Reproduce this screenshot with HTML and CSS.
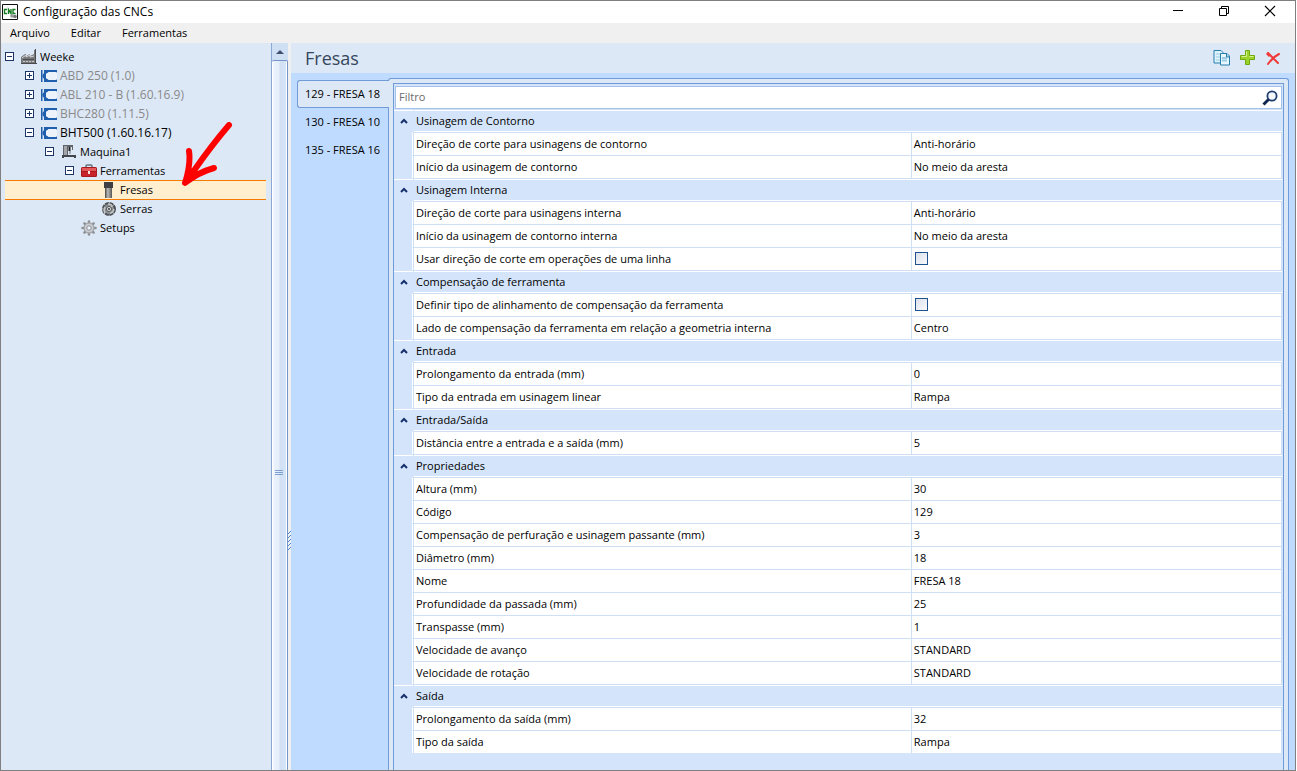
FILE: index.html
```html
<!DOCTYPE html>
<html lang="pt-BR">
<head>
<meta charset="utf-8">
<title>Configuração das CNCs</title>
<link rel="stylesheet" href="styles.css">
</head>
<body>
<svg class="symbols" aria-hidden="true">
  <symbol id="machine" viewBox="0 0 16 16">
    <path d="M0 2h1.500v12H0z" fill="#1f5fae"/>
    <path d="M3 2h13v3l-1-1H8L5 6v4l3 2h7l1-1v3H3v-3L1.500 9V7L3 5z" fill="#1f5fae"/>
    <path d="M8 4h6.500l1.500 1v6l-1.500 1H8l-3-2V6z" fill="#edf3fb"/>
  </symbol>
  <symbol id="gear" viewBox="0 0 16 16">
    <path d="M8 1.500v13M1.500 8h13M3.400 3.400l9.200 9.200M12.600 3.400l-9.200 9.200" stroke="#8f9398" stroke-width="2.600" stroke-linecap="round"/>
    <circle cx="8" cy="8" r="5" fill="#c9ccd0" stroke="#9a9ea3"/>
    <circle cx="8" cy="8" r="2.200" fill="#eef3f9" stroke="#8c9096"/>
  </symbol>
  <symbol id="chevron" viewBox="0 0 8 6"><path d="M1 5l3-3 3 3" fill="none" stroke="#16306b" stroke-width="2"/></symbol>
</svg>
<div class="window">
  <header class="titlebar">
    <svg class="app-icon" width="16" height="16" viewBox="0 0 16 16"><path d="M.5.5h15v15H.5z" fill="#fff" stroke="#111"/><path d="M5 5.500H2.500v4H5M6.500 10V5.500L9 9.500V5M13.500 5.500H11v4h2.500" fill="none" stroke="#177a22" stroke-width="1.400"/><circle cx="10" cy="12" r="1.800" fill="#999"/><circle cx="13" cy="12.500" r="1.800" fill="#777"/></svg>
    <h1 class="title">Configuração das CNCs</h1>
    <button class="win-button" aria-label="Minimizar"><svg width="12" height="12"><path d="M1 5.500h10" stroke="#000"/></svg></button>
    <button class="win-button" aria-label="Restaurar"><svg width="12" height="12"><path d="M1.500 3.500h7v7h-7zM3.500 3V1.500h7v7H9" fill="none" stroke="#000"/></svg></button>
    <button class="win-button" aria-label="Fechar"><svg width="12" height="12"><path d="M1 1l10 10M11 1L1 11" stroke="#000" stroke-width="1.200"/></svg></button>
  </header>
  <nav class="menubar">
    <button class="menu">Arquivo</button><button class="menu">Editar</button><button class="menu">Ferramentas</button>
  </nav>
  <div class="workspace">
    <aside class="sidebar">
      <ul class="tree">
        <li class="node"><button class="toggle" aria-label="Recolher Weeke"></button><svg class="icon" viewBox="0 0 16 16"><path d="M0 8l4-3h1v2l4-2v2l4-2V1h2v14H0z" fill="#77797b"/><path d="M1 9l4-3v2l4-2v2l4-1" fill="none" stroke="#d5d7d8"/><path d="M2 10.500h11" stroke="#4a4c4e"/><path d="M2 12.500h11" stroke="#c4c6c8" stroke-dasharray="2 1"/><path d="M0 14.500h16M14.500 0v14" stroke="#4a4c4e"/></svg><span class="label">Weeke</span></li>
        <li class="node level-1 machine muted"><button class="toggle closed" aria-label="Expandir ABD 250"></button><svg class="icon"><use href="#machine"/></svg><span class="label">ABD 250 (1.0)</span></li>
        <li class="node level-1 machine muted"><button class="toggle closed" aria-label="Expandir ABL 210"></button><svg class="icon"><use href="#machine"/></svg><span class="label">ABL 210 - B (1.60.16.9)</span></li>
        <li class="node level-1 machine muted"><button class="toggle closed" aria-label="Expandir BHC280"></button><svg class="icon"><use href="#machine"/></svg><span class="label">BHC280 (1.11.5)</span></li>
        <li class="node level-1"><button class="toggle" aria-label="Recolher BHT500"></button><svg class="icon"><use href="#machine"/></svg><span class="label machine">BHT500 (1.60.16.17)</span></li>
        <li class="node level-2"><button class="toggle" aria-label="Recolher Maquina1"></button><svg class="icon" viewBox="0 0 16 16"><path d="M2 1h10v5h-1V3H7v9H2z" fill="#606367"/><path d="M3 2h3v9H3z" fill="#a2a6a9"/><path d="M8.500 3v4" fill="none" stroke="#222" stroke-width="2"/><path d="M9 7v3" stroke="#777"/><path d="M1 11h14v3h-2v-1H3v1H1z" fill="#43464a"/></svg><span class="label">Maquina1</span></li>
        <li class="node level-3"><button class="toggle" aria-label="Recolher Ferramentas"></button><svg class="icon" viewBox="0 0 16 16"><path d="M5 5V3q0-1 1-1h4q1 0 1 1v2" fill="none" stroke="#66717c" stroke-width="1.500"/><rect y="4" width="16" height="10" rx="1.500" fill="#a81820"/><path d="M1 5h14v3H1z" fill="#e4585a"/><path d="M1 9h14v4H1z" fill="#c8232b"/><path d="M7 8h2v3H7z" fill="#f7e3e3"/></svg><span class="label">Ferramentas</span></li>
        <li class="node level-4 selected"><svg class="icon" viewBox="0 0 16 16"><defs><linearGradient id="steel"><stop stop-color="#444"/><stop offset=".4" stop-color="#bbb"/><stop offset="1" stop-color="#555"/></linearGradient></defs><path d="M3 0h9v6H3z" fill="#3d3f42"/><path d="M4 6h7v10H4z" fill="url(#steel)"/></svg><span class="label">Fresas</span></li>
        <li class="node level-4"><svg class="icon" viewBox="0 0 16 16"><circle cx="8" cy="8" r="6" fill="#8b8e91" stroke="#4c4f52" stroke-width="2" stroke-dasharray="4 .7"/><path d="M7 3q4 0 4 3M13 8q-1 4-4 4M4 12q-2-3 0-6" fill="none" stroke="#c4c6c8" stroke-width="1.500"/><circle cx="8" cy="8" r="2.500" fill="#dfe1e3" stroke="#55585b"/><circle cx="8" cy="8" r="1" fill="#333"/></svg><span class="label">Serras</span></li>
        <li class="node level-3 leaf"><svg class="icon"><use href="#gear"/></svg><span class="label">Setups</span></li>
      </ul>
      <div class="scrollbar"><button class="scroll-up" aria-label="Rolar para cima"><svg width="8" height="5"><path d="M0 5l4-4 4 4z" fill="#3d4f70"/></svg></button><div class="thumb"><svg width="8" height="6"><path d="M0 .5h8M0 2.500h8M0 4.500h8" stroke="#7d9fd0"/></svg></div></div>
      <svg class="pointer" width="52" height="68" viewBox="0 0 52 68" aria-hidden="true"><path d="M48 3Q30 24 12 50M8 29Q10 42 4 61Q18 50 33 46" fill="none" stroke="#f00" stroke-width="6" stroke-linecap="round" stroke-linejoin="round"/><path d="M8 30L4 61 34 47 17 49 9 46z" fill="#f00"/></svg>
    </aside>
    <div class="splitter"><svg width="3" height="20"><path d="M0 3l3-3M0 7l3-3M0 11l3-3M0 15l3-3M0 19l3-3" stroke="#4c86d0"/></svg></div>
    <main class="content">
      <div class="content-head">
        <h2 class="heading">Fresas</h2>
        <button class="tool" aria-label="Copiar"><svg width="18" height="16" viewBox="0 0 18 16"><path d="M1 .5h7l2 2V13H1z" fill="#dff3fc" stroke="#247eae"/><path d="M3 4h5M3 7h4M3 10h4" stroke="#9bcde6"/><path d="M7.500 3.500H14l2.500 2.500v9h-9z" fill="#e8f7fd" stroke="#247eae"/><path d="M13.500 4v3h3" fill="#a6d6eb" stroke="#247eae"/><path d="M9 8h5M9 10.500h5" stroke="#9bcde6" stroke-width="2"/></svg></button>
        <button class="tool" aria-label="Adicionar"><svg width="16" height="16" viewBox="0 0 16 16"><path d="M5.500.5h4v5h5v4h-5v5h-4v-5h-5v-4h5z" fill="#9bd32a" stroke="#6fa80f"/><path d="M6.500 1.500v5h-5M9.500 6.500h4" fill="none" stroke="#d6f28a"/></svg></button>
        <button class="tool" aria-label="Excluir"><svg width="16" height="16" viewBox="0 0 16 16"><path d="M3 3l4 4 6 6M14 4Q8 7 3 14" fill="none" stroke="#f03a3a" stroke-width="2" stroke-linecap="round"/><path d="M2 3l3 3" stroke="#f03a3a" stroke-width="3"/></svg></button>
      </div>
      <div class="editor">
        <div class="tabs" role="tablist">
          <button class="tab active" role="tab" aria-selected="true">129 - FRESA 18</button>
          <button class="tab" role="tab">130 - FRESA 10</button>
          <button class="tab" role="tab">135 - FRESA 16</button>
        </div>
        <div class="panel">
          <div class="panel-inner">
            <label class="search"><input class="filter" type="text" placeholder="Filtro" aria-label="Filtro"><svg width="16" height="16" viewBox="0 0 16 16"><circle cx="10" cy="6" r="4.600" fill="#f4f8fd" stroke="#203f70" stroke-width="1.800"/><path d="M6.500 9.500L1.500 14.500" stroke="#10264e" stroke-width="3"/></svg></label>
            <table class="grid">
              <colgroup><col class="col-gutter"><col class="col-name"><col class="col-value"></colgroup>
              <tbody>
                <tr class="category"><td><svg class="chevron"><use href="#chevron"/></svg></td><th colspan="2">Usinagem de Contorno</th></tr>
                <tr><td></td><th>Direção de corte para usinagens de contorno</th><td>Anti-horário</td></tr>
                <tr><td></td><th>Início da usinagem de contorno</th><td>No meio da aresta</td></tr>
              </tbody>
              <tbody>
                <tr class="category"><td><svg class="chevron"><use href="#chevron"/></svg></td><th colspan="2">Usinagem Interna</th></tr>
                <tr><td></td><th>Direção de corte para usinagens interna</th><td>Anti-horário</td></tr>
                <tr><td></td><th>Início da usinagem de contorno interna</th><td>No meio da aresta</td></tr>
                <tr><td></td><th><label for="single-line">Usar direção de corte em operações de uma linha</label></th><td><input class="check" type="checkbox" id="single-line"></td></tr>
              </tbody>
              <tbody>
                <tr class="category"><td><svg class="chevron"><use href="#chevron"/></svg></td><th colspan="2">Compensação de ferramenta</th></tr>
                <tr><td></td><th><label for="alignment">Definir tipo de alinhamento de compensação da ferramenta</label></th><td><input class="check" type="checkbox" id="alignment"></td></tr>
                <tr><td></td><th>Lado de compensação da ferramenta em relação a geometria interna</th><td>Centro</td></tr>
              </tbody>
              <tbody>
                <tr class="category"><td><svg class="chevron"><use href="#chevron"/></svg></td><th colspan="2">Entrada</th></tr>
                <tr><td></td><th>Prolongamento da entrada (mm)</th><td>0</td></tr>
                <tr><td></td><th>Tipo da entrada em usinagem linear</th><td>Rampa</td></tr>
              </tbody>
              <tbody>
                <tr class="category"><td><svg class="chevron"><use href="#chevron"/></svg></td><th colspan="2">Entrada/Saída</th></tr>
                <tr><td></td><th>Distância entre a entrada e a saída (mm)</th><td>5</td></tr>
              </tbody>
              <tbody>
                <tr class="category"><td><svg class="chevron"><use href="#chevron"/></svg></td><th colspan="2">Propriedades</th></tr>
                <tr><td></td><th>Altura (mm)</th><td>30</td></tr>
                <tr><td></td><th>Código</th><td>129</td></tr>
                <tr><td></td><th>Compensação de perfuração e usinagem passante (mm)</th><td>3</td></tr>
                <tr><td></td><th>Diâmetro (mm)</th><td>18</td></tr>
                <tr><td></td><th>Nome</th><td>FRESA 18</td></tr>
                <tr><td></td><th>Profundidade da passada (mm)</th><td>25</td></tr>
                <tr><td></td><th>Transpasse (mm)</th><td>1</td></tr>
                <tr><td></td><th>Velocidade de avanço</th><td>STANDARD</td></tr>
                <tr><td></td><th>Velocidade de rotação</th><td>STANDARD</td></tr>
              </tbody>
              <tbody>
                <tr class="category"><td><svg class="chevron"><use href="#chevron"/></svg></td><th colspan="2">Saída</th></tr>
                <tr><td></td><th>Prolongamento da saída (mm)</th><td>32</td></tr>
                <tr><td></td><th>Tipo da saída</th><td>Rampa</td></tr>
              </tbody>
            </table>
          </div>
        </div>
      </div>
    </main>
  </div>
</div>
</body>
</html>
```
FILE: styles.css
```css
* { box-sizing: border-box; }
body {
  margin: 0;
  padding-right: 1px;
  background: #fff;
  color: #000;
  font-family: "Open Sans", "Noto Sans", sans-serif;
  font-size: 11px;
}
h1, h2, ul { margin: 0; padding: 0; font-weight: 400; }
button { margin: 0; padding: 0; border: 0; background: none; color: inherit; font: inherit; }
svg { display: block; flex: none; }
.symbols { position: absolute; width: 0; height: 0; }
.window { display: flex; flex-direction: column; height: 100vh; border: 1px solid #7f7f7f; overflow: hidden; }

.titlebar { display: flex; align-items: center; height: 22px; flex: none; background: #fff; padding-left: 1px; }
.title { flex: 1; padding: 0 0 1px 5px; font-size: 12px; }
.win-button { display: flex; align-items: center; justify-content: center; width: 46px; height: 20px; padding-bottom: 2px; }
.win-button:last-child { margin-right: 2px; }
.menubar { display: flex; align-items: center; gap: 21px; height: 20px; flex: none; padding: 0 0 2px 9px; background: #f0f0f0; }

.workspace { display: flex; flex: 1; min-height: 0; }
.sidebar { position: relative; display: flex; flex: none; width: 287px; background: #dde8f6; }
.tree { flex: 1; padding: 4px 5px 0 4px; list-style: none; }
.node { display: flex; align-items: center; height: 19px; white-space: nowrap; }
.machine { font-size: 12px; }
.muted { color: #8a8a8a; }
.level-1 { padding-left: 20px; }
.level-2 { padding-left: 40px; }
.level-3 { padding-left: 60px; }
.level-3.leaf { padding-left: 76px; }
.level-4 { padding-left: 96px; }
.selected { background: #ffefcf; box-shadow: inset 0 1px #f57c00, 0 1px #f57c00; }
.icon { width: 16px; height: 16px; }
.label { padding-left: 3px; }
.toggle {
  width: 9px; height: 9px; margin-right: 7px; border: 1px solid #1c3466;
  background: linear-gradient(#1c3466, #1c3466) center / 5px 1px no-repeat, #fff;
}
.toggle.closed {
  background: linear-gradient(#1c3466, #1c3466) center / 5px 1px no-repeat, linear-gradient(#1c3466, #1c3466) center / 1px 5px no-repeat, #fff;
}
.scrollbar { display: flex; flex-direction: column; width: 17px; border-left: 1px solid #8ba7d4; background: #cfdff4; }
.scroll-up { display: flex; align-items: center; justify-content: center; height: 17px; flex: none; }
.thumb {
  display: flex; align-items: center; justify-content: center; flex: 1; padding: 114px 2px 0 0;
  border: 1px solid #7594c8; border-left: 0; border-bottom: 0; border-radius: 2px 2px 0 0;
  background: linear-gradient(90deg, #fff 1px, #e8f1fc 2px, #e5effb 7px, #d2e0f5 8px, #d6e4f7 14px, #fff 14px);
}
.pointer { position: absolute; left: 180px; top: 79px; }
.splitter { display: flex; align-items: center; flex: none; width: 3px; padding-top: 268px; background: #f0f0f0; }

.content { display: flex; flex-direction: column; flex: 1; min-width: 0; background: #bfdbff; }
.content-head { display: flex; align-items: center; gap: 9px; flex: none; height: 30px; padding: 0 14px 0 14px; background: #dde8f6; }
.heading { flex: 1; color: #35475c; font-size: 18px; }
.editor { display: flex; flex: 1; min-height: 0; padding: 5px 6px 0; }
.tabs { position: relative; display: flex; flex-direction: column; flex: none; width: 92px; padding-top: 2px; margin-right: -1px; }
.tab { height: 28px; padding: 0 0 2px 8px; text-align: left; white-space: nowrap; }
.tab.active { border: 1px solid #6f9bd8; border-right: 0; border-radius: 3px 0 0 3px; background: #dde8f6; padding-left: 7px; }
.panel { flex: 1; min-width: 0; padding: 4px 4px 0; border: 1px solid #6f9bd8; border-bottom: 0; border-radius: 3px 3px 0 0; background: #dde8f6; }
.panel-inner { height: 100%; padding: 2px 1px 0 0; border: 1px solid #6f9bd8; border-bottom: 0; background: #d4e5fb; }
.search { display: flex; align-items: center; height: 23px; margin-left: 1px; padding-right: 3px; border: 1px solid #a5c3ea; background: #fff; }
.filter { flex: 1; min-width: 0; padding: 0 3px 2px; border: 0; outline: 0; background: none; font: inherit; }
.filter::placeholder { color: #6b6b6b; opacity: 1; }

.grid { width: 100%; border-collapse: separate; border-spacing: 0; table-layout: fixed; }
.col-gutter { width: 19px; }
.col-value { width: 41.8%; }
.grid td, .grid th { height: 23px; padding: 0 0 0 2px; border-top: 1px solid #cfe0f4; text-align: left; font-weight: 400; line-height: 16px; white-space: nowrap; overflow: hidden; background: #fff; }
.grid td:first-child { border-top-color: #d4e5fb; border-right: 1px solid #fff; background: #d4e5fb; padding: 0; }
.grid th { border-left: 1px solid #cfe0f4; }
.grid td:last-child { border-left: 1px solid #cfe0f4; border-right: 1px solid #cfe0f4; }
.grid .category td, .grid .category th { border-left-color: #d4e5fb; border-right: 0; background: #d4e5fb; box-shadow: inset 0 1px #fff; }
.grid .category th { box-shadow: inset 0 1px #fff, inset 0 -1px #fff; }
.chevron { width: 8px; height: 6px; margin-left: 6px; }
.check { display: block; appearance: none; width: 13px; height: 13px; margin: 0 0 1px 1px; border: 1px solid #1f528f; background: linear-gradient(135deg, #dbe1ec, #f8f9fb); }
```
